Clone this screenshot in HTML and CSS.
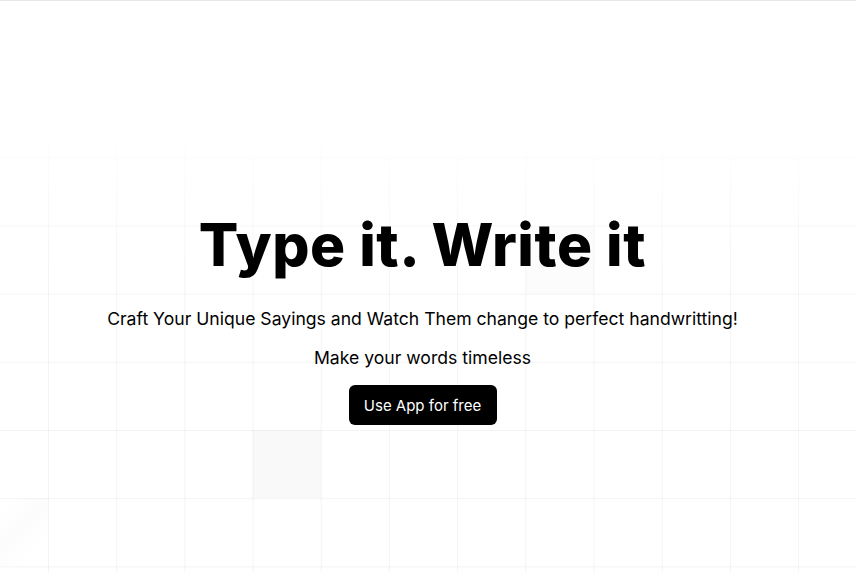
FILE: index.html
```html
<!DOCTYPE html>
<html lang="en">
<head>
<meta charset="utf-8">
<title>Type it. Write it</title>
<link rel="stylesheet" href="styles.css">
</head>
<body>
<main class="hero">
  <div class="grid-bg"></div>
  <div class="squares">
    <span class="sq sq-a"></span>
    <span class="sq sq-b"></span>
    <span class="sq sq-c"></span>
  </div>
  <section class="content">
    <h1 class="title">Type it. Write it</h1>
    <p class="lead">Craft Your Unique Sayings and Watch Them change to perfect handwritting!</p>
    <p class="sub">Make your words timeless</p>
    <a class="cta" href="#">Use App for free</a>
  </section>
</main>
</body>
</html>
```
FILE: styles.css
```css
* { box-sizing: border-box; }
html, body { margin: 0; padding: 0; background: #fff; }
body {
  font-family: Inter, "Noto Sans", sans-serif;
  color: #000;
  border-top: 1px solid #e5e7eb;
  overflow: hidden;
}
.hero {
  position: relative;
  height: 571px;
  overflow: hidden;
}
.grid-bg {
  position: absolute;
  inset: 0;
  background-image:
    linear-gradient(to right, rgba(0,0,0,0.045) 1px, transparent 1px),
    linear-gradient(to bottom, rgba(0,0,0,0.045) 1px, transparent 1px);
  background-size: 68.2px 68.2px;
  background-position: 48px 19.9px;
  -webkit-mask-image: linear-gradient(to bottom, transparent 120px, #000 270px);
  mask-image: linear-gradient(to bottom, transparent 120px, #000 270px);
}
.squares { position: absolute; inset: 0; }
.sq {
  position: absolute;
  width: 68px;
  height: 68px;
  background: rgba(0,0,0,0.022);
}
.sq-a { left: 253px; top: 429px; }
.sq-b { left: 526px; top: 225px; background: rgba(0,0,0,0.012); }
.sq-c { left: -20px; top: 497px; background: linear-gradient(135deg, transparent 25%, rgba(0,0,0,0.012) 50%, transparent 80%); }
.content {
  position: relative;
  display: flex;
  flex-direction: column;
  align-items: center;
  padding: 212px 11px 0 0;
  text-align: center;
}
.title {
  margin: 0;
  font-size: 58.5px;
  line-height: 64px;
  font-weight: 800;
  letter-spacing: 0.6px;
}
.lead {
  margin: 29px 0 0;
  font-size: 17.6px;
  line-height: 26px;
}
.sub {
  margin: 13px 0 0;
  font-size: 17.6px;
  line-height: 26px;
}
.cta {
  margin-top: 14px;
  display: inline-flex;
  align-items: center;
  justify-content: center;
  width: 148px;
  height: 40px;
  background: #000;
  color: #fff;
  border-radius: 6px;
  font-size: 15px;
  text-decoration: none;
}
```
